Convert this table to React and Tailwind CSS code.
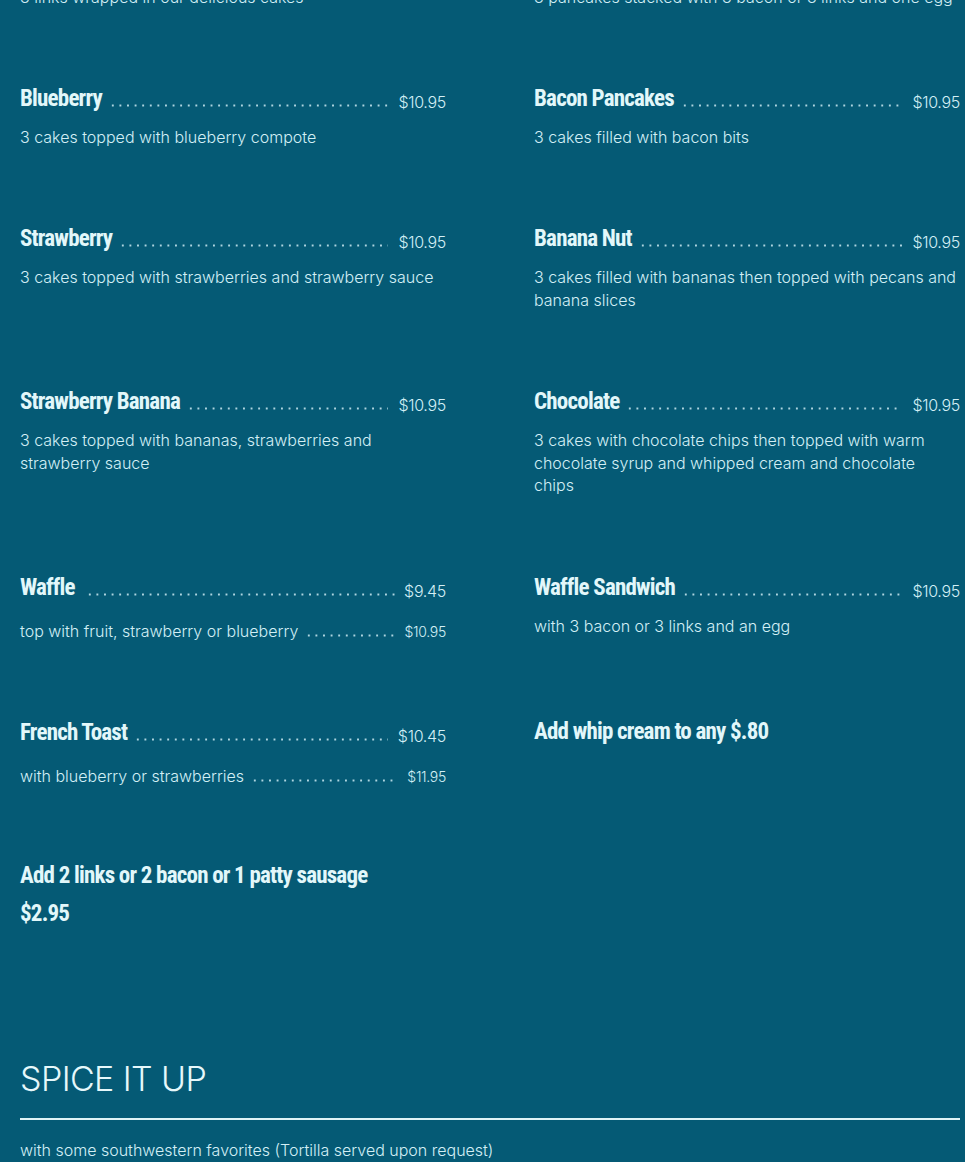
import React from "react";

const HEAD = "font-['Roboto_Condensed','Liberation_Sans_Narrow','DejaVu_Sans_Condensed',sans-serif] font-bold text-[23px] tracking-[-0.8px] leading-[32px] text-[#e2f7fa]";
const BODY = "font-['Inter','Open_Sans',sans-serif] font-light text-[#d3eff5]";
const DOTS = "flex-1 h-[3px] bg-[radial-gradient(circle,rgba(205,235,243,0.85)_0.9px,transparent_1.3px)] bg-[length:7.6px_3px] bg-repeat-x";

function Item({ name, price, desc, sub, dotsL = "ml-[7px]", dotsR = "mr-[10px]" }) {
  return (
    <div className="pb-[72px]">
      <div className="flex items-baseline h-[32px] pt-[3px]">
        <span className={HEAD}>{name}</span>
        <div className={`${DOTS} ${dotsL} ${dotsR} translate-y-[1px]`} />
        <span className={`${BODY} text-[16px] tracking-[-0.3px] translate-y-[2px]`}>{price}</span>
      </div>
      {desc && (
        <p className={`${BODY} mt-[14px] max-w-[423px] text-[16px] leading-[22.5px]`}>{desc}</p>
      )}
      {sub && (
        <div className="flex items-baseline mt-[19px] h-[22.5px]">
          <span className={`${BODY} text-[16px] leading-[22.5px]`}>{sub.text}</span>
          <div className={`${DOTS} ml-[7px] ${sub.dotsR}`} />
          <span className={`${BODY} text-[14px] tracking-[-0.3px]`}>{sub.price}</span>
        </div>
      )}
    </div>
  );
}

export default function App() {
  return (
    <div className="w-[965px] h-[1162px] overflow-hidden bg-[#055a75]">
      <div className="pl-[20px] pr-[5px]">
        <div className="grid grid-cols-2 gap-x-[88px] -mt-[14px]">
          <p className={`${BODY} text-[16px] leading-[22.5px] pb-[71px]`}>3 links wrapped in our delicious cakes</p>
          <p className={`${BODY} text-[16px] leading-[22.5px] pb-[71px]`}>3 pancakes stacked with 3 bacon or 3 links and one egg</p>

          <Item name="Blueberry" price="$10.95" desc="3 cakes topped with blueberry compote" />
          <Item name="Bacon Pancakes" price="$10.95" desc="3 cakes filled with bacon bits" />

          <Item name="Strawberry" price="$10.95" desc="3 cakes topped with strawberries and strawberry sauce" />
          <Item name="Banana Nut" price="$10.95" desc="3 cakes filled with bananas then topped with pecans and banana slices" />

          <Item name="Strawberry Banana" price="$10.95" desc="3 cakes topped with bananas, strawberries and strawberry sauce" />
          <Item name="Chocolate" price="$10.95" desc="3 cakes with chocolate chips then topped with warm chocolate syrup and whipped cream and chocolate chips" />

          <Item name="Waffle" price="$9.45" dotsL="ml-[11px]" dotsR="mr-[5px]" sub={{ text: "top with fruit, strawberry or blueberry", price: "$10.95", dotsR: "mr-[10px]" }} />
          <Item name="Waffle Sandwich" price="$10.95" desc="with 3 bacon or 3 links and an egg" />

          <Item name="French Toast" price="$10.45" sub={{ text: "with blueberry or strawberries", price: "$11.95", dotsR: "mr-[9px]" }} />
          <div className="pb-[72px] pt-[2px]">
            <div className={HEAD}>Add whip cream to any $.80</div>
          </div>
        </div>

        <div className={HEAD}>
          <div>Add 2 links or 2 bacon or 1 patty sausage</div>
          <div className="mt-[6px]">$2.95</div>
        </div>

        <h2 className="mt-[127px] font-['Inter',sans-serif] font-light text-[34px] leading-[44px] tracking-[-0.6px] text-[#e6f8fb]">SPICE IT UP</h2>
        <div className="mt-[17px] h-[2px] bg-[#e0f3f6]" />
        <p className={`${BODY} mt-[19px] text-[16px] leading-[22.5px]`}>with some southwestern favorites (Tortilla served upon request)</p>
      </div>
    </div>
  );
}
